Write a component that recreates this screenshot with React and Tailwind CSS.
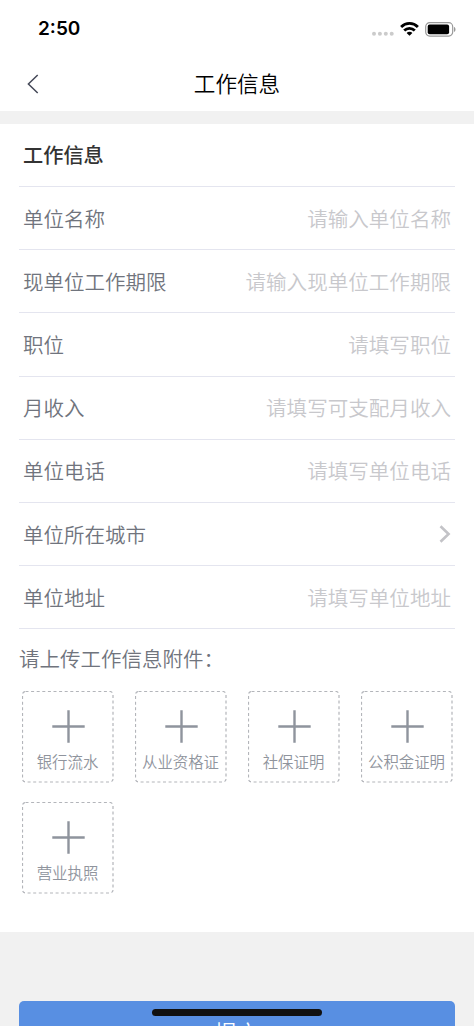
import { useState } from "react";

const fields = [
    { name: "company", label: "单位名称", placeholder: "请输入单位名称" },
    { name: "period", label: "现单位工作期限", placeholder: "请输入现单位工作期限" },
    { name: "position", label: "职位", placeholder: "请填写职位" },
    { name: "income", label: "月收入", placeholder: "请填写可支配月收入" },
    { name: "phone", label: "单位电话", placeholder: "请填写单位电话" },
    { name: "city", label: "单位所在城市", select: true },
    { name: "address", label: "单位地址", placeholder: "请填写单位地址" }
];

const attachments = ["银行流水", "从业资格证", "社保证明", "公积金证明", "营业执照"];

function StatusBar() {
    return (
        <div className="flex h-[58px] items-center justify-between pl-[38px] pr-[18px]">
            <span className="font-['Inter',sans-serif] text-[19px] font-semibold leading-[26px] text-black">2:50</span>
            <div className="flex items-center">
                <svg width="22" height="16" viewBox="0 0 22 16" fill="#cbcbcb">
                    <circle cx="2" cy="12.8" r="2" />
                    <circle cx="7.9" cy="12.8" r="2" />
                    <circle cx="13.8" cy="12.8" r="2" />
                    <circle cx="19.7" cy="12.8" r="2" />
                </svg>
                <svg className="ml-[6px]" width="19" height="14" viewBox="0 0 19 14" fill="none" stroke="#000" strokeWidth="2.8">
                    <path d="M1.1 4.9C5.8 .3 13.2 .3 17.9 4.9" />
                    <path d="M4.2 8.6C7.2 5.6 11.8 5.6 14.8 8.6" />
                    <path d="M9.5 13.8L6.6 10.9C8.2 9.4 10.8 9.4 12.4 10.9Z" fill="#000" stroke="none" />
                </svg>
                <svg className="ml-[6px]" width="31" height="15" viewBox="0 0 31 15">
                    <rect x=".7" y=".7" width="27" height="13.4" rx="4" fill="#fff" stroke="#999" strokeWidth="1.2" />
                    <rect x="2.7" y="2.6" width="21.4" height="9.6" rx="2" fill="#000" />
                    <path d="M29 5C31 5.6 31 9.3 29 9.9Z" fill="#999" />
                </svg>
            </div>
        </div>
    );
}

function Field({ field, value, onChange }) {
    return (
        <label className="flex h-[63.2px] items-center justify-between border-b-[1.5px] border-[#e4e5ef] px-1">
            <span className="shrink-0 text-[20.5px] text-[#70747d]">{field.label}</span>
            {field.select ? (
                <svg width="12" height="18" viewBox="0 0 12 18" fill="none" stroke="#c3c3c7" strokeWidth="2.6">
                    <path d="M1.5 1.2L9.6 9L1.5 16.8" />
                </svg>
            ) : (
                <input
                    name={field.name}
                    value={value}
                    onChange={onChange}
                    placeholder={field.placeholder}
                    className="w-0 flex-1 text-right text-[20.55px] text-[#70747d] outline-none placeholder:text-[#c8c8cc]"
                />
            )}
        </label>
    );
}

function UploadTile({ label }) {
    return (
        <button className="relative flex h-[92px] w-[92px] flex-col items-center pt-[19px] text-[#8f949d]">
            {/* dashed frame */}
            <svg className="absolute inset-0" width="92" height="92" fill="none" stroke="#b3b5ba" strokeDasharray="3 2.6">
                <rect x=".5" y=".5" width="90.5" height="90.5" rx="3" strokeWidth="1.2" />
            </svg>
            <svg className="ml-[2px]" width="33" height="33" viewBox="0 0 33 33" stroke="currentColor" strokeWidth="2.4">
                <path d="M.3 16.5H32.7M16.5 .3V32.7" />
            </svg>
            <span className="mt-[7px] whitespace-nowrap text-[15.4px] leading-[22px]">{label}</span>
        </button>
    );
}

export default function App() {
    const [formData, setFormData] = useState({});

    const handleChange = (e) => {
        setFormData({ ...formData, [e.target.name]: e.target.value });
    };

    return (
        <div className="relative flex h-[1026px] w-[474px] flex-col overflow-hidden bg-[#f1f1f1] font-['Noto_Sans_CJK_SC',sans-serif] font-[350]">
            <div className="h-[111px] shrink-0 bg-white">
                <StatusBar />
                <div className="grid h-[51px] grid-cols-[1fr_auto_1fr] items-center px-[27px]">
                    <svg width="12" height="20" viewBox="0 0 12 20" fill="none" stroke="#454958" strokeWidth="1.5">
                        <path d="M10.7 1L1.4 10L10.7 19" />
                    </svg>
                    <h1 className="-mt-[2px] text-[21.6px] leading-8 text-black">工作信息</h1>
                </div>
            </div>

            <div className="mt-[13px] h-[807.5px] shrink-0 bg-white px-[19px]">
                <h2 className="flex h-[63px] items-center border-b-[1.5px] border-[#e4e5ef] px-1 text-[20.2px] font-medium text-[#333]">
                    工作信息
                </h2>
                {fields.map((field) => (
                    <Field key={field.name} field={field} value={formData[field.name] || ""} onChange={handleChange} />
                ))}
                <p className="mt-[14px] text-[20.5px] leading-[30px] text-[#70747d]">请上传工作信息附件：</p>
                <div className="mt-[18px] grid grid-cols-[repeat(4,92px)] gap-x-[21px] gap-y-[19px] pl-[2.5px]">
                    {attachments.map((label) => (
                        <UploadTile key={label} label={label} />
                    ))}
                </div>
            </div>

            <button className="mx-[19px] mt-[69px] h-[65px] shrink-0 rounded-[5px] bg-[#588fe2] text-[22.5px] text-white">
                提交
            </button>

            {/* home indicator */}
            <div className="absolute bottom-[10px] left-[152px] h-[7px] w-[170px] rounded-full bg-[#111]" />
        </div>
    );
}
